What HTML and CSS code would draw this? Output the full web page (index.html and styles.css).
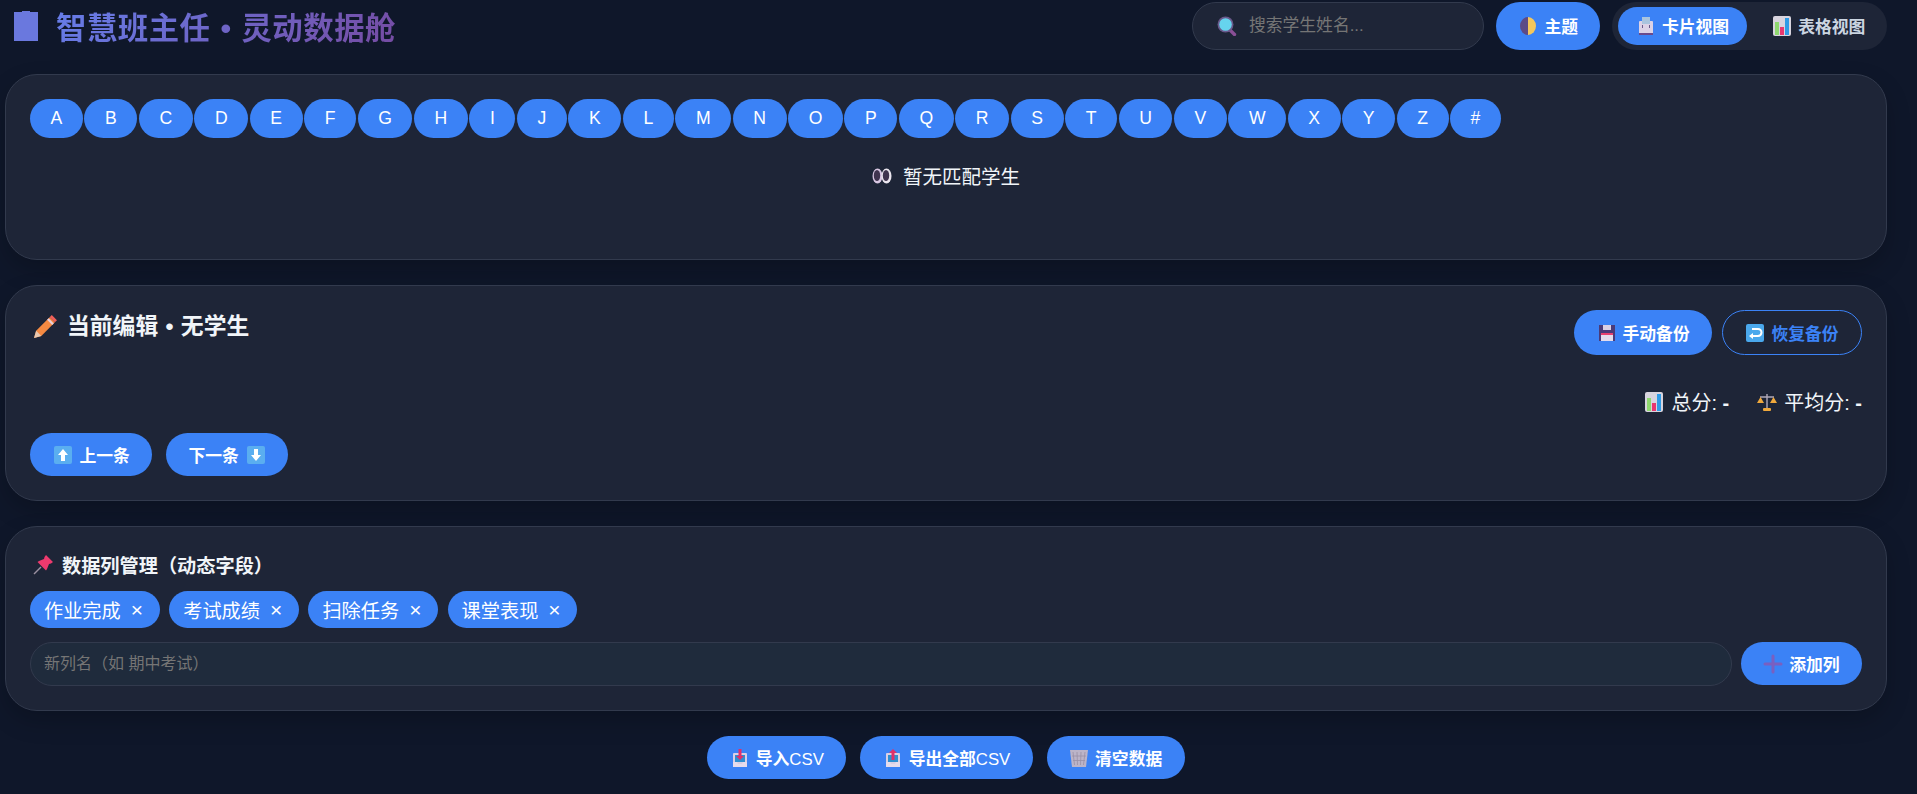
FILE: index.html
```html
<!DOCTYPE html>
<html lang="zh-CN">
<head>
    <meta charset="UTF-8">
    <meta name="viewport" content="width=device-width, initial-scale=1.0">
    <title>智慧班主任 • 灵动数据舱</title>
    <link rel="stylesheet" href="styles.css">
</head>
<body>
    <svg class="sprites" width="0" height="0">
        <symbol id="i-bars" viewBox="0 0 20 20">
            <rect x="1" y="0" width="18" height="20" rx="2" fill="#d8d4de"/>
            <rect x="3" y="6" width="4" height="13" fill="#8fd86f"/>
            <rect x="8" y="11" width="4" height="8" fill="#e8376f"/>
            <rect x="13" y="2" width="4" height="17" fill="#2f9be6"/>
        </symbol>
        <symbol id="i-tray" viewBox="0 0 20 20">
            <rect x="3" y="5" width="14" height="14" rx="1" fill="#d9cfe4"/>
            <rect x="5" y="7" width="10" height="7" fill="#2f8fd0"/>
            <path d="M3 14h4l1 2h4l1-2h4v5H3z" fill="#e6dcec"/>
        </symbol>
    </svg>

    <header class="topbar">
        <h1 class="logo">
            <svg class="logo-icon" viewBox="0 0 24 30"><path d="M0 1h8V0h8v1h8v29H0z" fill="#6a78de"/></svg>
            <span class="logo-text">智慧班主任 • 灵动数据舱</span>
        </h1>
        <div class="top-actions">
            <label class="search">
                <svg class="icon" viewBox="0 0 20 20">
                    <path d="M12.500 13.500l5 5" stroke="#8a4f96" stroke-width="3.400" stroke-linecap="round"/>
                    <circle cx="8.500" cy="8.500" r="8" fill="#6a5a8c"/>
                    <circle cx="8.500" cy="8.500" r="6.300" fill="#66d4ee"/>
                </svg>
                <input type="text" placeholder="搜索学生姓名...">
            </label>
            <button class="btn">
                <svg class="icon" viewBox="0 0 20 20">
                    <path d="M10 1a8 9 0 0 0 0 18z" fill="#5d4a86"/>
                    <path d="M10 1a8 9 0 0 1 0 18z" fill="#f5c75c"/>
                </svg>
                主题
            </button>
            <div class="view-switch">
                <button class="view-btn active">
                    <svg class="icon" viewBox="0 0 20 20">
                        <rect x="3" y="5" width="14" height="14" rx="1" fill="#dcd2e6"/>
                        <rect x="6" y="1" width="8" height="7" fill="#a9c4de"/>
                        <path d="M3 17h14v2H3z" fill="#6a4a8c"/>
                        <path d="M6.500 9v3M13.500 9v3" stroke="#6a5a8c"/>
                    </svg>
                    卡片视图
                </button>
                <button class="view-btn">
                    <svg class="icon"><use href="#i-bars"/></svg>
                    表格视图
                </button>
            </div>
        </div>
    </header>

    <section class="card students">
        <div class="letters">
            <button class="letter">A</button>
            <button class="letter">B</button>
            <button class="letter">C</button>
            <button class="letter">D</button>
            <button class="letter">E</button>
            <button class="letter">F</button>
            <button class="letter">G</button>
            <button class="letter">H</button>
            <button class="letter">I</button>
            <button class="letter">J</button>
            <button class="letter">K</button>
            <button class="letter">L</button>
            <button class="letter">M</button>
            <button class="letter">N</button>
            <button class="letter">O</button>
            <button class="letter">P</button>
            <button class="letter">Q</button>
            <button class="letter">R</button>
            <button class="letter">S</button>
            <button class="letter">T</button>
            <button class="letter">U</button>
            <button class="letter">V</button>
            <button class="letter">W</button>
            <button class="letter">X</button>
            <button class="letter">Y</button>
            <button class="letter">Z</button>
            <button class="letter">#</button>
        </div>
        <div class="empty">
            <svg class="icon" viewBox="0 0 20 20">
                <ellipse cx="5.500" cy="10" rx="5" ry="7.500" fill="#d9c7e3"/>
                <ellipse cx="14.500" cy="10" rx="5" ry="7.500" fill="#ebe6ee"/>
                <ellipse cx="5" cy="9.500" rx="3.200" ry="5.500" fill="#40344f"/>
                <ellipse cx="14" cy="9.500" rx="3.200" ry="5.500" fill="#40344f"/>
            </svg>
            暂无匹配学生
        </div>
    </section>

    <section class="card editor">
        <div class="editor-head">
            <h2 class="editor-title">
                <svg class="icon-lg" viewBox="0 0 24 24">
                    <path d="M1 23l2-7L16 3l5 5L8 21z" fill="#f58a42"/>
                    <path d="M16 3l2-2 5 5-2 2z" fill="#f0605a"/>
                    <path d="M15 4l5 5-1.500 1.500-5-5z" fill="#e8d0dc"/>
                    <path d="M1 23l2-7 5 5z" fill="#e8c8b0"/>
                </svg>
                当前编辑 • 无学生
            </h2>
            <div class="editor-actions">
                <button class="btn">
                    <svg class="icon" viewBox="0 0 20 20">
                        <rect x="2" y="2" width="16" height="16" fill="#4a3a78"/>
                        <rect x="6" y="2" width="8" height="5" fill="#d9cfe4"/>
                        <rect x="4" y="10" width="12" height="8" fill="#e4dcec"/>
                        <rect x="4" y="10" width="12" height="2" fill="#e8406f"/>
                    </svg>
                    手动备份
                </button>
                <button class="btn btn-outline">
                    <svg class="icon" viewBox="0 0 20 20">
                        <rect x="1" y="1" width="18" height="18" rx="2" fill="#4aa8ec"/>
                        <path d="M6 13h7a3 3 0 0 0 0-7H7" fill="none" stroke="#fff" stroke-width="2"/>
                        <path d="M8 10l-4 3 4 3z" fill="#fff"/>
                    </svg>
                    恢复备份
                </button>
            </div>
        </div>
        <div class="stats">
            <span class="stat"><svg class="icon"><use href="#i-bars"/></svg><span>总分: <b>-</b></span></span>
            <span class="stat">
                <svg class="icon" viewBox="0 0 20 20">
                    <path d="M10 2v15M3 5h14" stroke="#b0a8b8" stroke-width="1.4"/>
                    <path d="M0 11h7l-3.500-6zM13 11h7l-3.500-6z" fill="#f0a93c"/>
                    <rect x="6" y="16" width="8" height="3" rx="1" fill="#f0a93c"/>
                </svg>
                <span>平均分: <b>-</b></span>
            </span>
        </div>
        <div class="pager">
            <button class="btn">
                <svg class="icon" viewBox="-1 0 20 20">
                    <rect x="1" y="1" width="18" height="18" rx="2" fill="#5aaef0"/>
                    <path d="M10 4l5 6h-3v6H8v-6H5z" fill="#fff"/>
                </svg>
                上一条
            </button>
            <button class="btn">
                下一条
                <svg class="icon" viewBox="0 0 20 20">
                    <rect x="1" y="1" width="18" height="18" rx="2" fill="#5aaef0"/>
                    <path d="M10 16l5-6h-3V4H8v6H5z" fill="#fff"/>
                </svg>
            </button>
        </div>
    </section>

    <section class="card columns">
        <h3 class="columns-title">
            <svg class="icon" viewBox="0 0 20 20">
                <path d="M1 19l7-7" stroke="#9a90a0" stroke-width="1.500"/>
                <path d="M13 0l7 7-2 1.500-2 .5-2 5-1 1.500L4.500 7 6 6l5-2 .5-2z" fill="#ee3a6e"/>
            </svg>
            数据列管理（动态字段）
        </h3>
        <div class="tags">
            <span class="tag">作业完成<span class="tag-x">×</span></span>
            <span class="tag">考试成绩<span class="tag-x">×</span></span>
            <span class="tag">扫除任务<span class="tag-x">×</span></span>
            <span class="tag">课堂表现<span class="tag-x">×</span></span>
        </div>
        <div class="add-row">
            <input class="add-input" type="text" placeholder="新列名（如 期中考试）">
            <button class="btn">
                <svg class="icon" viewBox="0 0 20 20">
                    <path d="M10 2v16M2 10h16" stroke="#7a5fc0" stroke-width="3" stroke-linecap="round"/>
                </svg>
                添加列
            </button>
        </div>
    </section>

    <footer class="footer">
        <button class="btn">
            <svg class="icon" viewBox="0 0 20 20">
                <use href="#i-tray"/>
                <path d="M10 12l4-4h-2.500V1h-3v7H6z" fill="#e0306a"/>
            </svg>
            <span>导入<span class="latin">CSV</span></span>
        </button>
        <button class="btn">
            <svg class="icon" viewBox="0 0 20 20">
                <use href="#i-tray"/>
                <path d="M10 1l4 4h-2.500v7h-3V5H6z" fill="#e0306a"/>
            </svg>
            <span>导出全部<span class="latin">CSV</span></span>
        </button>
        <button class="btn">
            <svg class="icon" viewBox="0 0 20 20">
                <path d="M1 2h18l-2 17H3z" fill="#bcb4c8"/>
                <path d="M4 4l1.500 13M8 4l.5 13M12 4l-.5 13M16 4l-1.500 13M3 8h14M4 12.500h12" stroke="#9a90a6" stroke-width=".8"/>
            </svg>
            清空数据
        </button>
    </footer>
</body>
</html>
```

FILE: styles.css
```css
* {
    box-sizing: border-box;
}
body {
    margin: 0;
    padding: 2px 30px 0 5px;
    font-family: "Liberation Sans", "Noto Sans CJK SC", sans-serif;
    background: #0f172a;
    color: #f1f5f9;
    min-height: 100vh;
}
button, input {
    font-family: inherit;
}
.sprites {
    position: absolute;
}
.icon {
    width: 20px;
    height: 20px;
    flex: none;
}
.icon-lg {
    width: 25px;
    height: 25px;
    flex: none;
    margin-left: 3px;
}
.latin {
    font-weight: 400;
}

/* top bar */
.topbar {
    display: flex;
    justify-content: space-between;
    align-items: center;
    margin-bottom: 24px;
}
.logo {
    display: flex;
    align-items: center;
    gap: 18px;
    margin: 0 0 0 9px;
    font-size: 30.4px;
    font-weight: 700;
    letter-spacing: 0.5px;
    word-spacing: 1px;
}
.logo-icon {
    width: 24px;
    height: 30px;
}
.logo-text {
    background: linear-gradient(135deg, #667eea 0%, #764ba2 100%);
    -webkit-background-clip: text;
    background-clip: text;
    color: transparent;
}
.top-actions {
    display: flex;
    align-items: center;
    gap: 12px;
}
.search {
    display: flex;
    align-items: center;
    gap: 10px;
    width: 292px;
    height: 48px;
    padding: 0 24px;
    background: #1e2537;
    border: 1px solid #323a4d;
    border-radius: 32px;
}
.search input {
    flex: 1;
    min-width: 0;
    background: none;
    border: none;
    outline: none;
    color: #f1f5f9;
    font-size: 16.8px;
}
.btn {
    display: inline-flex;
    align-items: center;
    gap: 6px;
    height: 43px;
    padding: 0 22.4px;
    background: #3b82f6;
    color: white;
    border: none;
    border-radius: 32px;
    font-size: 16.8px;
    font-weight: 700;
    white-space: nowrap;
    cursor: pointer;
}
.topbar .btn {
    height: 48px;
}
.btn-outline {
    background: none;
    color: #3b82f6;
    border: 1px solid #3b82f6;
}
.view-switch {
    display: flex;
    gap: 8px;
    padding: 5px 4px 5px 6px;
    background: #1e2537;
    border-radius: 32px;
}
.view-btn {
    display: inline-flex;
    align-items: center;
    gap: 6px;
    height: 38px;
    padding: 0 17.6px;
    background: none;
    color: #cbd5e1;
    border: none;
    border-radius: 32px;
    font-size: 16.8px;
    font-weight: 700;
    white-space: nowrap;
    cursor: pointer;
}
.view-btn.active {
    background: #3b82f6;
    color: white;
}

/* cards */
.card {
    background: #1e2537;
    border: 1px solid #323a4d;
    border-radius: 32px;
    padding: 24px;
    margin-bottom: 25px;
    box-shadow: 0 10px 25px rgba(0,0,0,0.2);
}
.students {
    height: 186px;
}
.letters {
    display: flex;
    gap: 1.5px;
}
.letter {
    height: 39px;
    padding: 0 20.6px;
    background: #3b82f6;
    color: white;
    border: none;
    border-radius: 20px;
    font-size: 17.6px;
    cursor: pointer;
}
.empty {
    display: flex;
    justify-content: center;
    align-items: center;
    gap: 11px;
    margin-top: 23px;
    font-size: 19.5px;
}
.editor-head {
    display: flex;
    justify-content: space-between;
    align-items: flex-start;
}
.editor-title {
    display: flex;
    align-items: center;
    gap: 9px;
    margin: 0;
    font-size: 22.8px;
    line-height: 1.45;
    font-weight: 700;
    word-spacing: 1px;
}
.editor-actions {
    display: flex;
    gap: 10px;
}
.editor-actions .btn {
    height: 45px;
}
.stats {
    display: flex;
    justify-content: flex-end;
    gap: 28px;
    margin-top: 32px;
    font-size: 20px;
}
.stat {
    display: flex;
    align-items: center;
    gap: 7px;
}
.pager {
    display: flex;
    gap: 14px;
    margin-top: 17px;
}
.pager .btn {
    gap: 7px;
}
.columns-title {
    display: flex;
    align-items: center;
    gap: 9px;
    margin: 0 0 12px;
    font-size: 19.2px;
    font-weight: 700;
}
.columns-title .icon {
    margin-left: 3px;
}
.tags {
    display: flex;
    gap: 9.6px;
    margin-bottom: 14px;
}
.tag {
    display: inline-flex;
    align-items: center;
    gap: 10px;
    height: 37px;
    padding: 0 16.6px 0 14px;
    background: #3b82f6;
    color: white;
    border-radius: 20px;
    font-size: 19.2px;
}
.tag-x {
    font-size: 21px;
    line-height: 1;
}
.add-row {
    display: flex;
    gap: 9px;
}
.add-input {
    flex: 1;
    height: 44px;
    padding: 0 13px;
    background: #1f2b3c;
    border: 1px solid #323a4d;
    border-radius: 32px;
    outline: none;
    color: #f1f5f9;
    font-size: 16px;
}
.footer {
    display: flex;
    justify-content: center;
    gap: 14px;
}
```
